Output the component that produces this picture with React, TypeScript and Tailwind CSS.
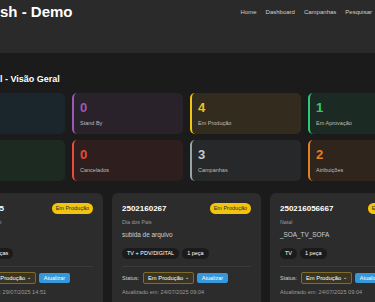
import React from "react";

const stats = [
  [
    { value: "12", label: "Total", color: "border-[#3498db]", text: "text-[#3498db]", bg: "bg-[#1a262c]" },
    { value: "0", label: "Stand By", color: "border-[#9b59b6]", text: "text-[#9b59b6]", bg: "bg-[#2a222b]" },
    { value: "4", label: "Em Produção", color: "border-[#f1c40f]", text: "text-[#f1c40f]", bg: "bg-[#322b1e]" },
    { value: "1", label: "Em Aprovação", color: "border-[#2ecc71]", text: "text-[#2ecc71]", bg: "bg-[#1b2a23]" },
  ],
  [
    { value: "7", label: "Concluídos", color: "border-[#27ae60]", text: "text-[#27ae60]", bg: "bg-[#1c2a22]" },
    { value: "0", label: "Cancelados", color: "border-[#e74c3c]", text: "text-[#e74c3c]", bg: "bg-[#2e1e1e]" },
    { value: "3", label: "Campanhas", color: "border-[#95a5a6]", text: "text-[#c4c9cc]", bg: "bg-[#262829]" },
    { value: "2", label: "Atribuições", color: "border-[#e67e22]", text: "text-[#e67e22]", bg: "bg-[#2f251d]" },
  ],
];

const jobs = [
  { id: "250216025", name: "Dia do Trabalho", desc: "", tags: ["TV", "2 peças"], date: "29/07/2025 14:51" },
  { id: "2502160267", name: "Dia dos Pais", desc: "subida de arquivo", tags: ["TV + PDV/DIGITAL", "1 peça"], date: "24/07/2025 09:04" },
  { id: "250216056667", name: "Natal", desc: "_SOA_TV_SOFA", tags: ["TV", "1 peça"], date: "24/07/2025 09:04" },
];

const JobCard: React.FC<{ job: (typeof jobs)[number] }> = ({ job }) => (
  <div className="h-[130px] rounded-[6px] bg-[#2c2c2c] px-[10px] pt-[10px]">
    <div className="flex items-start justify-between">
      <div className="pt-[1px] text-[8px] font-bold leading-[9px] text-white">{job.id}</div>
      <span className="flex h-[11px] items-center rounded-full bg-[#f1c40f] px-[4px] text-[5.5px] text-[#2b2b2b]">
        Em Produção
      </span>
    </div>
    <div className="mt-[5px] h-[6px] text-[5.3px] leading-[6px] text-[#9a9a9a]">{job.name}</div>
    <div className="mt-[6px] h-[8px] text-[6.4px] leading-[8px] text-[#cfcfcf]">{job.desc}</div>
    <div className="mt-[9px] flex gap-[3px]">
      {job.tags.map((t) => (
        <span key={t} className="flex h-[11px] items-center rounded-full bg-[#1b1b1b] px-[5px] text-[5.5px] text-white">
          {t}
        </span>
      ))}
    </div>
    <div className="mt-[7px] border-t border-[#3a3a3a]" />
    <div className="mt-[5px] flex items-center gap-[2px]">
      <span className="w-[19px] text-[5.5px] text-[#cfcfcf]">Status:</span>
      <div className="flex h-[12px] w-[51px] items-center justify-between rounded-[2px] border border-[#7f6c2c] bg-[#3a3421] px-[4px] text-[5.8px] text-white">
        <span>Em Produção</span>
        <span className="text-[5px]">⌄</span>
      </div>
      <span className="ml-[1px] flex h-[10px] w-[31px] items-center justify-center rounded-[2px] bg-[#3498db] text-[5.5px] text-white">
        Atualizar
      </span>
    </div>
    <div className="mt-[5px] text-[5.6px] leading-[6px] text-[#9a9a9a]">Atualizado em: {job.date}</div>
  </div>
);

const App: React.FC = () => {
  return (
    <div className="h-[302px] w-[375px] overflow-hidden bg-[#1b1b1b] font-['Liberation_Sans',Arial,sans-serif]">
      <header className="flex h-[53px] items-start justify-between bg-[#2a2a2a] pr-[3px] pt-[3px]">
        <h1 className="text-[15px] font-bold leading-[17px] text-white">sh - Demo</h1>
        <nav className="flex gap-[9px] pt-[5px] text-[6px] text-[#cfcfcf]">
          <span>Home</span>
          <span>Dashboard</span>
          <span>Campanhas</span>
          <span>Pesquisar</span>
        </nav>
      </header>
      <main>
        <h2 className="pt-[21px] text-[9px] font-bold leading-[10px] text-white">l - Visão Geral</h2>
        <div className="ml-[-46px] mt-[9px] flex flex-col gap-[6px]">
          {stats.map((row, i) => (
            <div key={i} className="grid grid-cols-[111px_111px_111px_111px] gap-[7px]">
              {row.map((s) => (
                <div key={s.label} className={`h-[41px] rounded-[5px] border-l-2 ${s.color} ${s.bg} pl-[6px] pt-[8px]`}>
                  <div className={`text-[13px] font-bold leading-[13px] ${s.text}`}>{s.value}</div>
                  <div className="mt-[6px] text-[5.5px] leading-[6px] text-[#bdbdbd]">{s.label}</div>
                </div>
              ))}
            </div>
          ))}
        </div>
        <div className="ml-[-46px] mt-[12px] grid grid-cols-[149px_149px_149px] gap-[9px]">
          {jobs.map((j) => (
            <JobCard key={j.id} job={j} />
          ))}
        </div>
      </main>
    </div>
  );
};

export default App;
